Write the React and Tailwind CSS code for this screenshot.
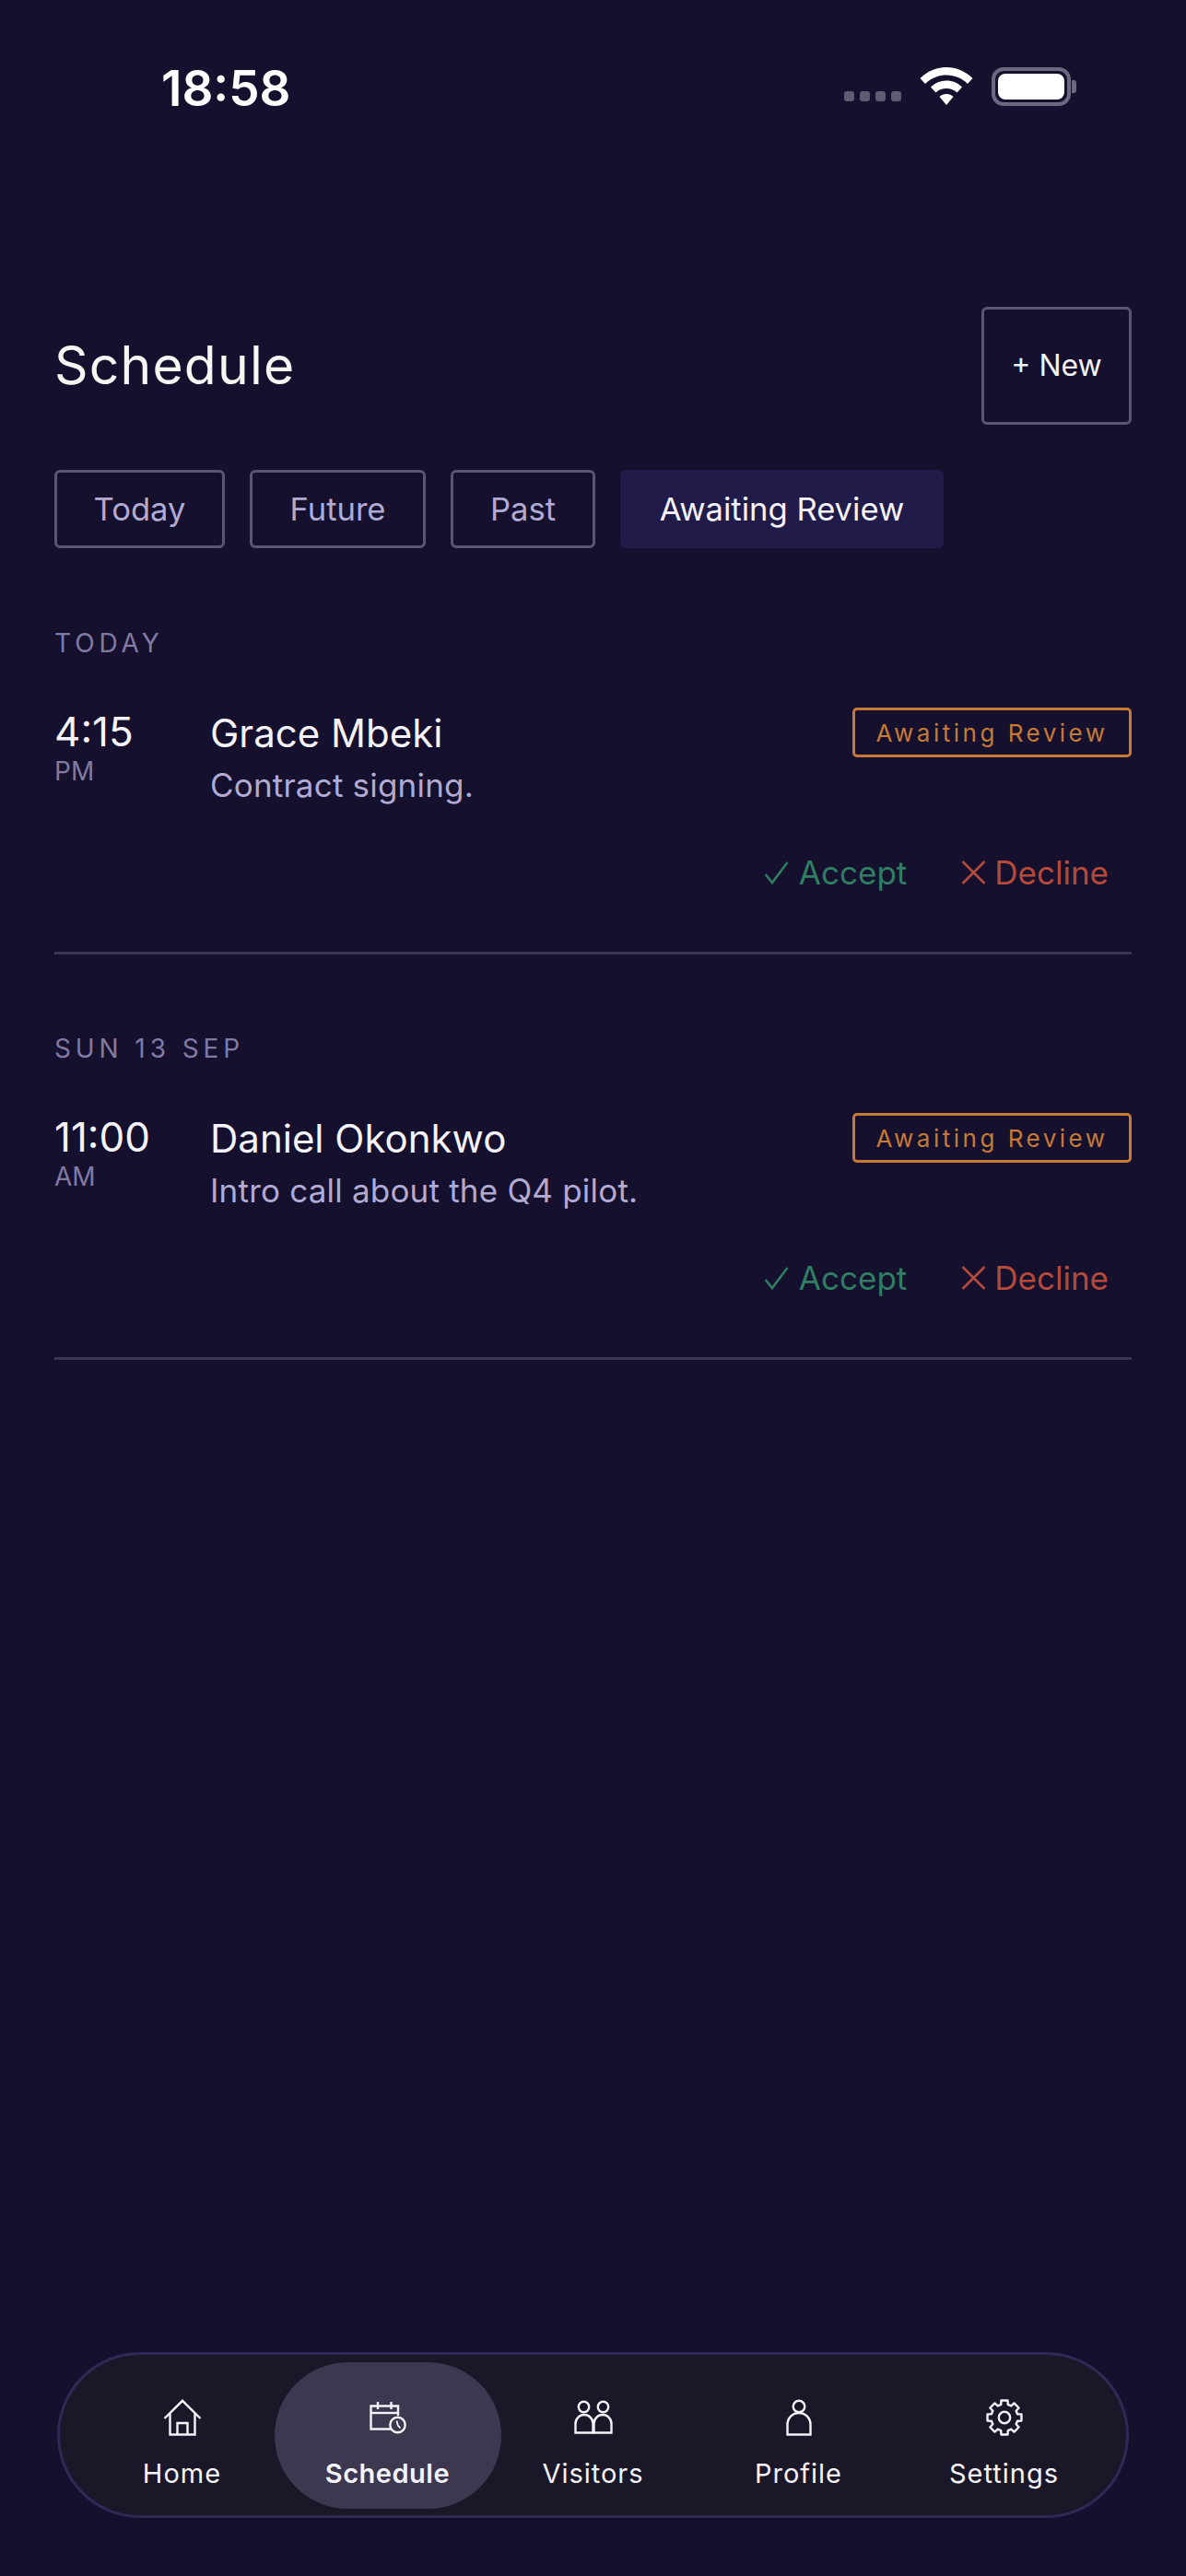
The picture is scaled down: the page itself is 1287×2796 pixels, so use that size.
const sans = "font-['Inter','Liberation_Sans',sans-serif]";

function Home() {
  return (
    <svg width="42" height="40" viewBox="0 0 42 40" fill="none" stroke="#f5f3fa" strokeWidth="2.4">
      <path d="M1.5 21 L21 1.8 L40.5 21" />
      <path d="M7.5 15.5 V38.5 H34.5 V15.5" />
      <path d="M15.5 38.5 V26 H26.5 V38.5" />
    </svg>
  );
}
function Calendar() {
  return (
    <svg width="40" height="36" viewBox="0 0 40 36" fill="none" stroke="#f5f3fa" strokeWidth="2.4">
      <path d="M29 30.5 H1.5 V5.5 H31 V16" />
      <path d="M1.5 13 H31" />
      <path d="M9 1 V9 M23.5 1 V9" />
      <circle cx="30.5" cy="26" r="8.2" fill="#3c3850" />
      <path d="M29.5 21.5 L30.8 26.5 L33.5 29.5" strokeWidth="1.8" />
    </svg>
  );
}
function Visitors() {
  return (
    <svg width="42" height="37" viewBox="0 0 42 37" fill="none" stroke="#f5f3fa" strokeWidth="2.4">
      <circle cx="10.5" cy="7.5" r="5.7" />
      <circle cx="31.5" cy="7.5" r="5.7" />
      <path d="M1.5 35.5 V25.5 A9.5 9.5 0 0 1 20.5 25.5 V35.5 Z" />
      <path d="M21.5 35.5 V25.5 A9.5 9.5 0 0 1 40.5 25.5 V35.5 Z" />
    </svg>
  );
}
function Profile() {
  return (
    <svg width="28" height="40" viewBox="0 0 28 40" fill="none" stroke="#f5f3fa" strokeWidth="2.4">
      <circle cx="14" cy="8" r="6.3" />
      <path d="M1.5 38.5 V27.5 A12.5 12.5 0 0 1 26.5 27.5 V38.5 Z" />
    </svg>
  );
}
function Gear() {
  const pts = [];
  for (let i = 0; i < 8; i++) {
    const c = (i * Math.PI) / 4 - Math.PI / 2;
    const a = (11 * Math.PI) / 180;
    const b = (15 * Math.PI) / 180;
    pts.push([c - b, 14.6], [c - a, 18.8], [c + a, 18.8], [c + b, 14.6]);
  }
  const d = pts
    .map(([t, r], i) => `${i ? "L" : "M"}${(20 + r * Math.cos(t)).toFixed(2)} ${(20 + r * Math.sin(t)).toFixed(2)}`)
    .join(" ") + " Z";
  return (
    <svg width="40" height="40" viewBox="0 0 40 40" fill="none" stroke="#f5f3fa" strokeWidth="2.4" strokeLinejoin="round">
      <path d={d} />
      <circle cx="20" cy="20" r="6.2" />
    </svg>
  );
}

function Tab({ label, active, w }) {
  return active ? (
    <div className={`${w} h-[85px] flex items-center justify-center rounded-[6px] bg-[#211b4a] text-[34.6px] text-[#f5f3fa]`}>{label}</div>
  ) : (
    <div className={`${w} h-[85px] flex items-center justify-center rounded-[6px] border-[3px] border-[#5a5670] text-[34.6px] text-[#b1aad3]`}>{label}</div>
  );
}

function Item({ day, time, ampm, name, note }) {
  return (
    <section>
      <div className="h-[28px] leading-[28px] text-[28px] tracking-[4.9px] text-[#817ba3]">{day}</div>
      <div className="flex mt-[57px]">
        <div className="w-[169px] shrink-0">
          <div className="text-[44px] leading-[50px] text-[#f5f3fa]">{time}</div>
          <div className="text-[28px] leading-[36px] text-[#817ba3]">{ampm}</div>
        </div>
        <div className="flex-1 min-w-0">
          <div className="flex items-start justify-between">
            <div>
              <div className="text-[42px] leading-[54px] text-[#f5f3fa]">{name}</div>
              <div className="text-[35px] leading-[46px] mt-[6px] tracking-[0.2px] text-[#b1aad3]">{note}</div>
            </div>
            <div className="h-[54px] w-[303px] -mt-[1px] flex items-center justify-center rounded-[5px] border-[3px] border-[#c77a35] text-[26px] tracking-[3.5px] text-[#c77a35]">Awaiting Review</div>
          </div>
        </div>
      </div>
      <div className="flex justify-end items-center gap-[59px] pr-[25px] mt-[47px] h-[50px] text-[35px]">
        <div className="flex items-center gap-[11px] text-[#2f7d62]">
          <svg width="27" height="26" viewBox="0 0 27 26" fill="none" stroke="#2f7d62" strokeWidth="2.6"><path d="M1.5 15 L9 24 L25.5 2" /></svg>
          Accept
        </div>
        <div className="flex items-center gap-[9px] text-[#b5493a]">
          <svg width="27" height="26" viewBox="0 0 27 26" fill="none" stroke="#b5493a" strokeWidth="2.6"><path d="M1.5 1 L25.5 25 M25.5 1 L1.5 25" /></svg>
          Decline
        </div>
      </div>
      <div className="h-[3px] mt-[61px] bg-[#3a3556]" />
    </section>
  );
}

function NavItem({ icon, label, active }) {
  return active ? (
    <div className="w-[246px] -mx-[11.5px] h-[159px] flex flex-col items-center rounded-[84px] bg-[#3c3850] pt-[41px]">
      <div className="h-[38px] flex items-center">{icon}</div>
      <div className="mt-[24px] text-[29px] leading-[36px] font-semibold tracking-[0.5px] text-[#f5f3fa]">{label}</div>
    </div>
  ) : (
    <div className="w-[223px] h-[159px] flex flex-col items-center pt-[41px]">
      <div className="h-[38px] flex items-center">{icon}</div>
      <div className="mt-[24px] text-[29px] leading-[36px] font-normal tracking-[1px] text-[#f5f3fa]">{label}</div>
    </div>
  );
}

export default function App() {
  return (
    <div className={`${sans} w-full min-h-[2796px] flex flex-col bg-[#14102e]`}>
      <header className="h-[190px] flex items-start justify-between pl-[175px] pr-[119px] pt-[69px]">
        <div className="text-[53px] leading-[54px] font-semibold text-white">18:58</div>
        <div className="flex items-center pt-[4px]">
          <div className="flex gap-[6px] mt-[21px]">
            {[0, 1, 2, 3].map((i) => (
              <div key={i} className="w-[11px] h-[11px] rounded-[3px] bg-[#5f5b73]" />
            ))}
          </div>
          <svg className="ml-[20px]" width="58" height="42" viewBox="0 0 58 42" fill="white">
            <path d="M29 0 C40 0 50 4.5 57.5 12 L52 18 C46 12 38 8.5 29 8.5 C20 8.5 12 12 6 18 L0.5 12 C8 4.5 18 0 29 0 Z" />
            <path d="M29 14.5 C35.5 14.5 41.5 17 46 21.5 L40.5 27.5 C37.5 24.5 33.5 23 29 23 C24.5 23 20.5 24.5 17.5 27.5 L12 21.5 C16.5 17 22.5 14.5 29 14.5 Z" />
            <path d="M29 29 C32 29 34.5 30 36.5 32 L29 41 L21.5 32 C23.5 30 26 29 29 29 Z" />
          </svg>
          <div className="ml-[20px] w-[86px] h-[42px] rounded-[13px] border-[4px] border-[#6b6880] p-[3px]">
            <div className="w-full h-full rounded-[8px] bg-white" />
          </div>
          <div className="ml-[1px] w-[5px] h-[14px] rounded-r-[3px] bg-[#6b6880]" />
        </div>
      </header>

      <main className="px-[59px] pt-[143px]">
        <div className="flex items-center justify-between h-[128px]">
          <h1 className="text-[57px] font-normal tracking-[1.2px] text-[#f8f6f2]">Schedule</h1>
          <div className="w-[163px] h-[128px] flex items-center justify-center rounded-[6px] border-[3px] border-[#5a5670] text-[32px] text-[#f5f3fa]">+ New</div>
        </div>

        <div className="flex gap-[27px] mt-[49px]">
          <Tab label="Today" w="w-[185px]" />
          <Tab label="Future" w="w-[191px]" />
          <Tab label="Past" w="w-[157px]" />
          <Tab label="Awaiting Review" w="w-[351px]" active />
        </div>

        <div className="mt-[89px] flex flex-col gap-[88px]">
          <Item day="TODAY" time="4:15" ampm="PM" name="Grace Mbeki" note="Contract signing." />
          <Item day="SUN 13 SEP" time="11:00" ampm="AM" name="Daniel Okonkwo" note="Intro call about the Q4 pilot." />
        </div>
      </main>

      <nav className="mt-auto mb-[63px] mx-[62px] h-[180px] flex items-center justify-center rounded-[90px] border-[3px] border-[#2f2a55] bg-[#1a1728]">
        <NavItem icon={<Home />} label="Home" />
        <NavItem icon={<Calendar />} label="Schedule" active />
        <NavItem icon={<Visitors />} label="Visitors" />
        <NavItem icon={<Profile />} label="Profile" />
        <NavItem icon={<Gear />} label="Settings" />
      </nav>
    </div>
  );
}
